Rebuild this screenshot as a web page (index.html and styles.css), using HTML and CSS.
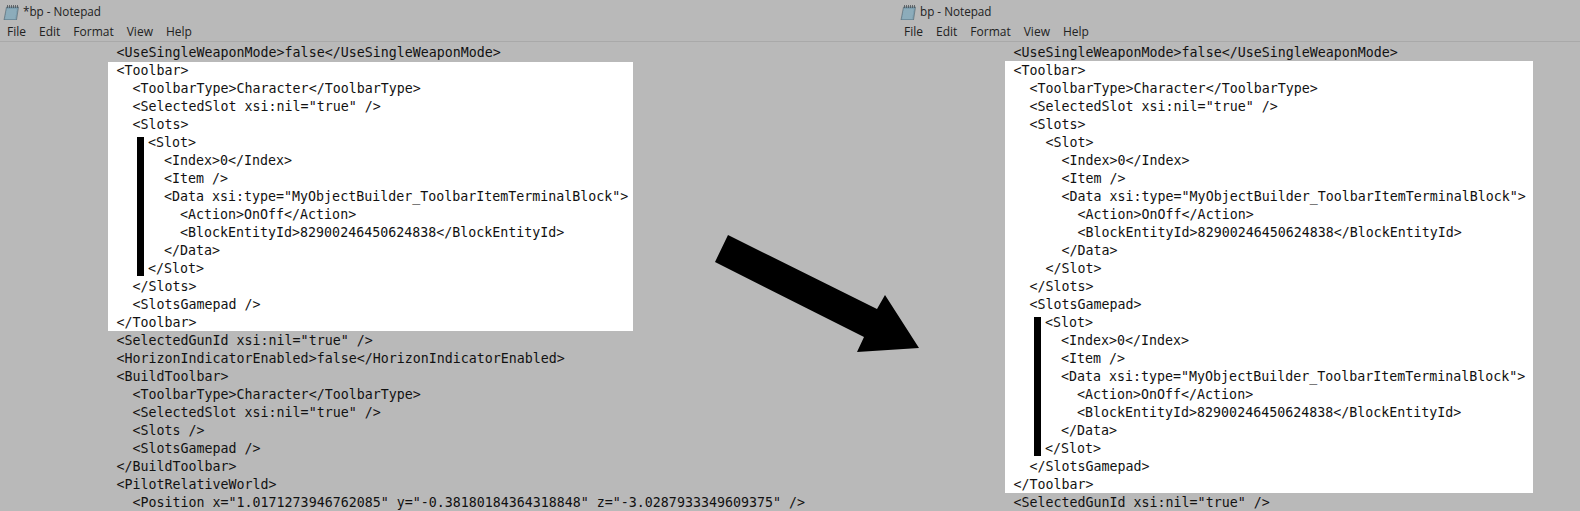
FILE: index.html
```html
<!DOCTYPE html>
<html lang="en">
<head>
<meta charset="utf-8">
<title>Notepad comparison</title>
<link rel="stylesheet" href="styles.css">
</head>
<body>
<main class="stage">
  <section class="pane pane-left">
    <header class="title"><svg class="icon" viewBox="0 0 16 16"><path class="page" d="M3.5 3H15.5L13.5 16H1z"/><path class="lines" d="M3.6 6h10M3.2 8h10M3 10h10M2.6 12h10M2.3 14h10"/><path class="rings" d="M4.5 1v3M6.5 1v3M8.5 1v3M10.5 1v3M12.5 1v3M14.5 1v3"/></svg><span>*bp - Notepad</span></header>
    <nav class="menu"><span>File</span><span>Edit</span><span>Format</span><span>View</span><span>Help</span></nav>
    <div class="doc">
<pre class="code">&lt;UseSingleWeaponMode&gt;false&lt;/UseSingleWeaponMode&gt;</pre>
<div class="hl hl-left">
<pre class="code">&lt;Toolbar&gt;
  &lt;ToolbarType&gt;Character&lt;/ToolbarType&gt;
  &lt;SelectedSlot xsi:nil="true" /&gt;
  &lt;Slots&gt;</pre>
<pre class="code mark">&lt;Slot&gt;
  &lt;Index&gt;0&lt;/Index&gt;
  &lt;Item /&gt;
  &lt;Data xsi:type="MyObjectBuilder_ToolbarItemTerminalBlock"&gt;
    &lt;Action&gt;OnOff&lt;/Action&gt;
    &lt;BlockEntityId&gt;82900246450624838&lt;/BlockEntityId&gt;
  &lt;/Data&gt;
&lt;/Slot&gt;</pre>
<pre class="code">  &lt;/Slots&gt;
  &lt;SlotsGamepad /&gt;
&lt;/Toolbar&gt;</pre>
</div>
<pre class="code">&lt;SelectedGunId xsi:nil="true" /&gt;
&lt;HorizonIndicatorEnabled&gt;false&lt;/HorizonIndicatorEnabled&gt;
&lt;BuildToolbar&gt;
  &lt;ToolbarType&gt;Character&lt;/ToolbarType&gt;
  &lt;SelectedSlot xsi:nil="true" /&gt;
  &lt;Slots /&gt;
  &lt;SlotsGamepad /&gt;
&lt;/BuildToolbar&gt;
&lt;PilotRelativeWorld&gt;
  &lt;Position x="1.0171273946762085" y="-0.38180184364318848" z="-3.0287933349609375" /&gt;</pre>
    </div>
    <svg class="arrow" viewBox="0 0 210 120"><polygon points="13,0 162,74 170,60 204,113 142,117 149,102 0,27"/></svg>
  </section>
  <section class="pane pane-right">
    <header class="title"><svg class="icon" viewBox="0 0 16 16"><path class="page" d="M3.5 3H15.5L13.5 16H1z"/><path class="lines" d="M3.6 6h10M3.2 8h10M3 10h10M2.6 12h10M2.3 14h10"/><path class="rings" d="M4.5 1v3M6.5 1v3M8.5 1v3M10.5 1v3M12.5 1v3M14.5 1v3"/></svg><span>bp - Notepad</span></header>
    <nav class="menu"><span>File</span><span>Edit</span><span>Format</span><span>View</span><span>Help</span></nav>
    <div class="doc">
<pre class="code">&lt;UseSingleWeaponMode&gt;false&lt;/UseSingleWeaponMode&gt;</pre>
<div class="hl hl-right">
<pre class="code">&lt;Toolbar&gt;
  &lt;ToolbarType&gt;Character&lt;/ToolbarType&gt;
  &lt;SelectedSlot xsi:nil="true" /&gt;
  &lt;Slots&gt;
    &lt;Slot&gt;
      &lt;Index&gt;0&lt;/Index&gt;
      &lt;Item /&gt;
      &lt;Data xsi:type="MyObjectBuilder_ToolbarItemTerminalBlock"&gt;
        &lt;Action&gt;OnOff&lt;/Action&gt;
        &lt;BlockEntityId&gt;82900246450624838&lt;/BlockEntityId&gt;
      &lt;/Data&gt;
    &lt;/Slot&gt;
  &lt;/Slots&gt;
  &lt;SlotsGamepad&gt;</pre>
<pre class="code mark">&lt;Slot&gt;
  &lt;Index&gt;0&lt;/Index&gt;
  &lt;Item /&gt;
  &lt;Data xsi:type="MyObjectBuilder_ToolbarItemTerminalBlock"&gt;
    &lt;Action&gt;OnOff&lt;/Action&gt;
    &lt;BlockEntityId&gt;82900246450624838&lt;/BlockEntityId&gt;
  &lt;/Data&gt;
&lt;/Slot&gt;</pre>
<pre class="code">  &lt;/SlotsGamepad&gt;
&lt;/Toolbar&gt;</pre>
</div>
<pre class="code">&lt;SelectedGunId xsi:nil="true" /&gt;</pre>
    </div>
  </section>
</main>
</body>
</html>
```
FILE: styles.css
```css
html, body {
  margin: 0;
  height: 100%;
  overflow: hidden;
  background: #b9b9b9;
}
.stage {
  display: flex;
  width: 1580px;
  height: 511px;
  overflow: hidden;
}
.pane {
  position: relative;
  display: flex;
  flex-direction: column;
  height: 511px;
}
.pane-left { flex: 0 0 897px; }
.pane-right { flex: 0 0 683px; }
.title {
  display: flex;
  align-items: center;
  gap: 4px;
  height: 23px;
  padding-left: 3px;
  font: 11.7px/23px "Open Sans", "Noto Sans", sans-serif;
  color: #222;
}
.icon {
  width: 16px;
  height: 16px;
  flex: none;
}
.page { fill: #7d9fb0; stroke: #56676f; stroke-width: .6; }
.lines { fill: none; stroke: #a3c0cc; stroke-width: .8; }
.rings { fill: none; stroke: #4b5257; stroke-width: .8; }
.menu {
  display: flex;
  gap: 13px;
  height: 18px;
  padding-left: 7px;
  font: 12px/18px "Open Sans", "Noto Sans", sans-serif;
  color: #222;
  border-bottom: 1px solid #a9a9a9;
}
.doc {
  padding: 1px 0 0 116.5px;
}
.code {
  margin: 0;
  font: 13.3px/18px "DejaVu Sans Mono", "Liberation Mono", monospace;
  color: #111;
  white-space: pre;
  transform: translateY(1px);
}
.hl {
  background: #fff;
  margin-left: -8.5px;
  padding-left: 8.5px;
}
.hl-left {
  width: 516.5px;
  background: linear-gradient(#fff, #fff) 0 1px no-repeat;
}
.hl-right { width: 519.5px; }
.mark {
  margin-left: 20.5px;
  padding-left: 11px;
  background: linear-gradient(#000, #000) 0 3px / 7px 139px no-repeat;
}
.arrow {
  position: absolute;
  left: 715px;
  top: 235px;
  width: 210px;
  height: 120px;
}
```
